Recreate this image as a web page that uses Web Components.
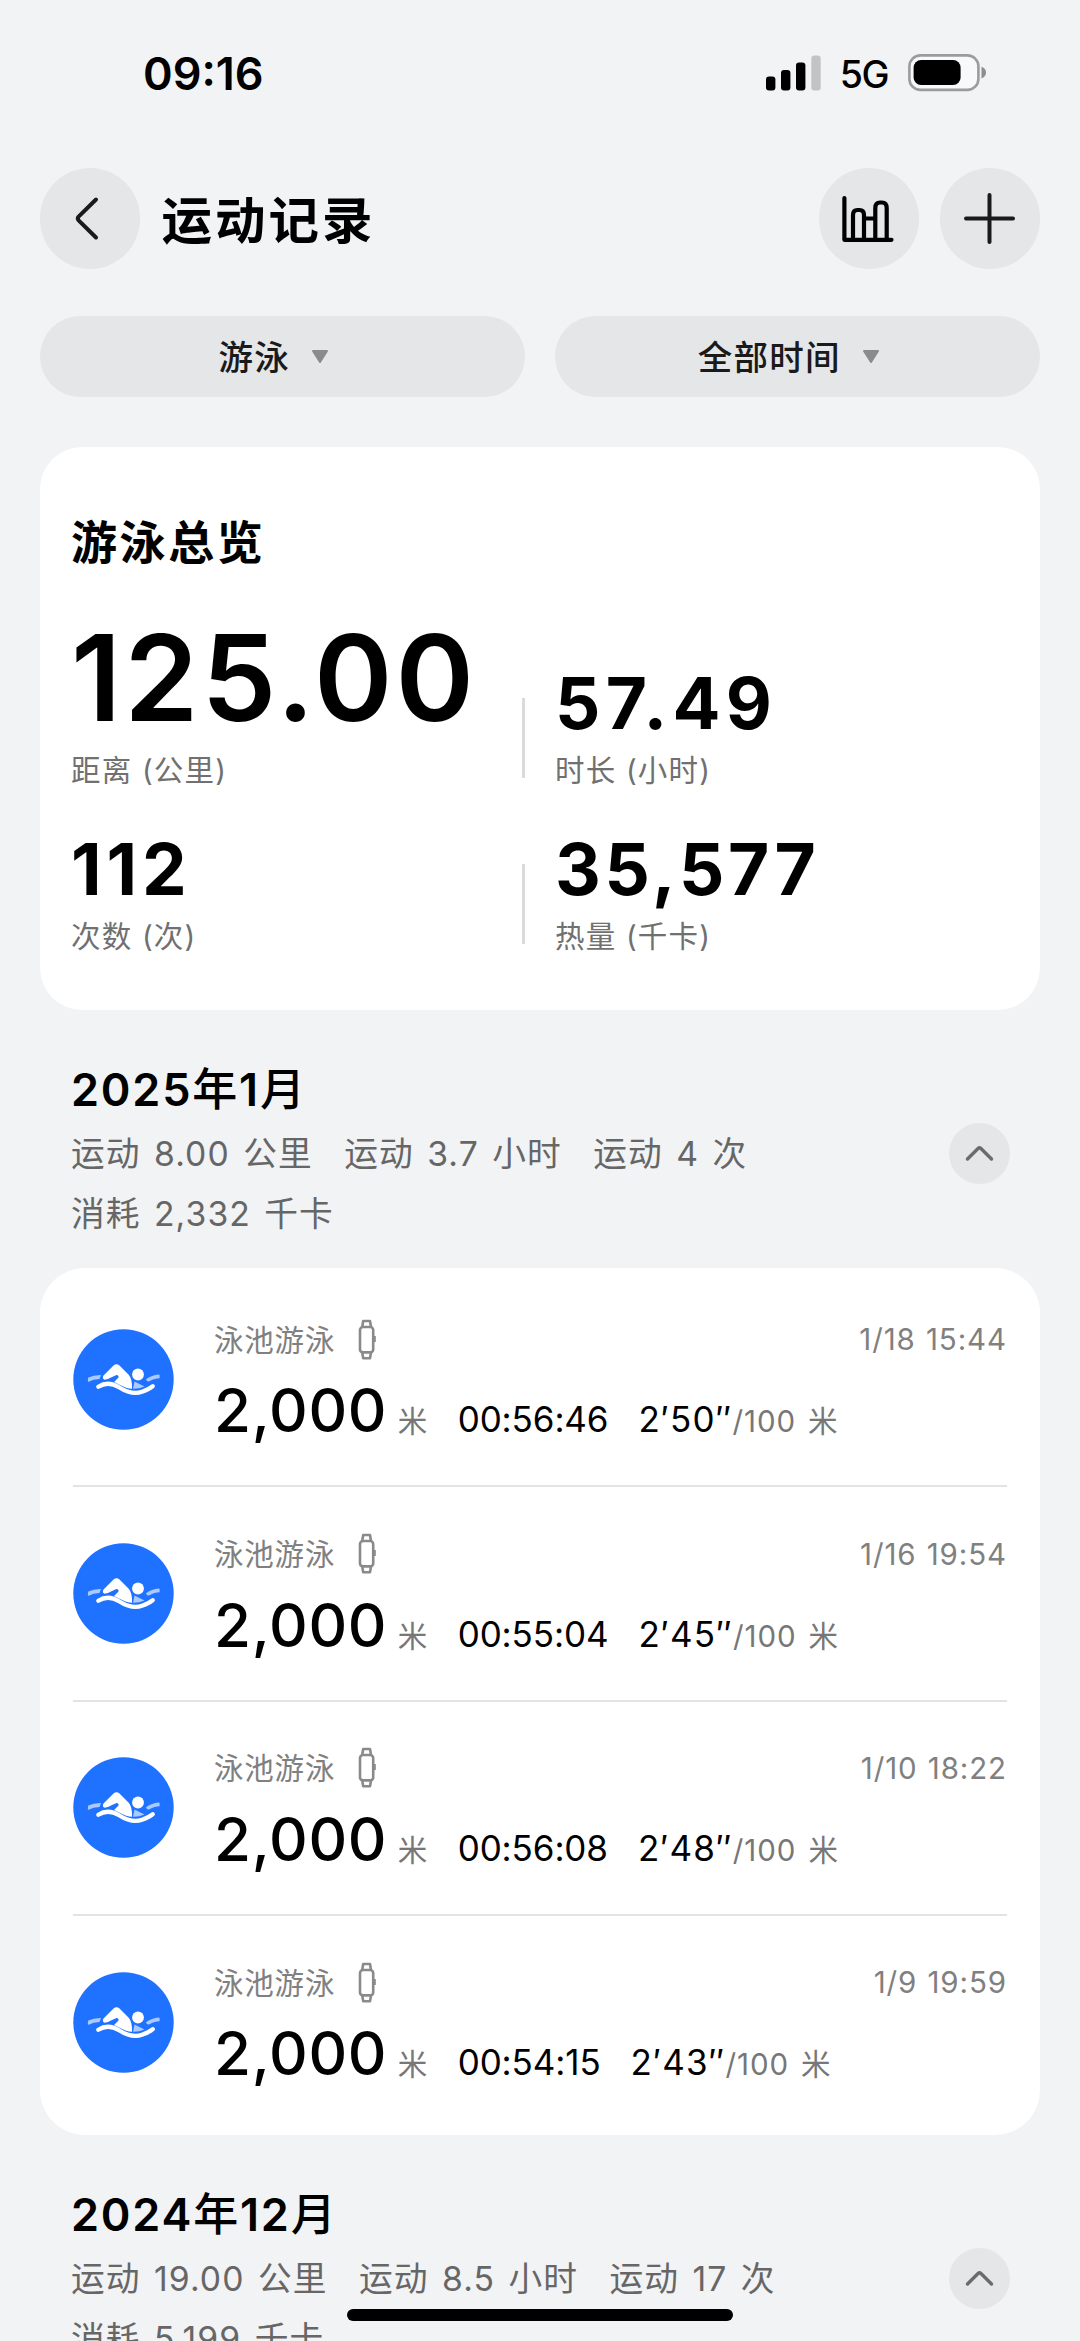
<!DOCTYPE html>
<html lang="zh-CN">
<head>
<meta charset="utf-8">
<title>运动记录</title>
<style>
  body {
    margin: 0;
    background: #f2f3f5;
    font-family: Inter, "Noto Sans CJK SC", sans-serif;
    color: #000;
  }
</style>
</head>
<body>
<sport-records></sport-records>

<script>
class StatusBar extends HTMLElement {
  connectedCallback() {
    this.attachShadow({ mode: "open" }).innerHTML = /*html*/ `
    <style>
      :host {
        display: flex;
        justify-content: space-between;
        align-items: center;
        height: 146px;
        padding: 0 94px 0 143px;
      }
      .time {
        font-size: 45px;
        font-weight: 600;
        letter-spacing: 0;
      }
      .right {
        display: flex;
        align-items: center;
      }
      .net {
        font-size: 37.5px;
        font-weight: 500;
        letter-spacing: -1.5px;
        margin: 3px 20px 0 19px;
      }
      svg { display: block; }
    </style>
    <span class="time">${this.getAttribute("time")}</span>
    <div class="right">
      <svg width="55" height="36" viewBox="0 0 55 36">
        <rect x="0" y="21.5" width="9.4" height="14" rx="3"/>
        <rect x="15" y="15" width="9.4" height="20.5" rx="3"/>
        <rect x="30" y="7.5" width="9.4" height="28" rx="3"/>
        <rect x="45.3" y="0.5" width="9.4" height="35" rx="3" fill="#c2c3c5"/>
      </svg>
      <span class="net">${this.getAttribute("network")}</span>
      <svg width="78" height="38" viewBox="0 0 78 38">
        <rect x="1.4" y="1.4" width="69" height="34.5" rx="11" fill="#f8f9fa" stroke="#9b9c9e" stroke-width="2.6"/>
        <rect x="5.6" y="6" width="47" height="25" rx="7.5"/>
        <path d="M73.5 12.8q4.5 1.5 4.5 5.8t-4.5 5.8z" fill="#8d8e90"/>
      </svg>
    </div>
    `;
  }
}
customElements.define("status-bar", StatusBar);

class IconButton extends HTMLElement {
  connectedCallback() {
    this.attachShadow({ mode: "open" }).innerHTML = /*html*/ `
    <style>
      :host {
        display: flex;
        align-items: center;
        justify-content: center;
        flex: none;
        width: var(--size, 100.5px);
        height: var(--size, 100.5px);
        border-radius: 50%;
        background: #e5e6e8;
      }
    </style>
    <slot></slot>
    `;
  }
}
customElements.define("icon-button", IconButton);

class PageHeader extends HTMLElement {
  connectedCallback() {
    this.attachShadow({ mode: "open" }).innerHTML = /*html*/ `
    <style>
      :host {
        display: flex;
        align-items: center;
        height: 101px;
        padding: 22px 40px 0 39.5px;
      }
      h1 {
        flex: 1;
        margin: 4px 0 0 21.5px;
        font-size: 50.5px;
        font-weight: 700;
        line-height: 70px;
        letter-spacing: 3px;
      }
      .add { margin-left: 20.5px; }
      svg {
        display: block;
        flex: none;
        fill: none;
        stroke: #1a1a1a;
        stroke-width: 4;
        stroke-linecap: round;
        stroke-linejoin: round;
      }
      .chart svg { stroke: #000; stroke-width: 4.2; }
    </style>
    <icon-button>
      <svg width="101" height="101" viewBox="0 0 101 101">
        <path d="M57 31.5L39.6 48.7Q38 50.5 39.6 52.3L57 69.5"/>
      </svg>
    </icon-button>
    <h1><slot></slot></h1>
    <icon-button class="chart">
      <svg width="101" height="101" viewBox="0 0 101 101">
        <path d="M26.4 30V71.8H73.5"/>
        <path d="M35 71V47Q35 42 39.5 42H41.5Q46 42 46 47V71"/>
        <path d="M57.3 71V40Q57.3 34.5 62 34.5H64Q68.7 34.5 68.7 40V71M46 50.5H57.3"/>
      </svg>
    </icon-button>
    <icon-button class="add">
      <svg width="101" height="101" viewBox="0 0 101 101">
        <path d="M50.5 27V74M27 50.5H74"/>
      </svg>
    </icon-button>
    `;
  }
}
customElements.define("page-header", PageHeader);

class FilterPill extends HTMLElement {
  connectedCallback() {
    this.attachShadow({ mode: "open" }).innerHTML = /*html*/ `
    <style>
      :host {
        display: flex;
        flex: 1;
        align-items: center;
        justify-content: center;
        gap: 21.5px;
        height: 81px;
        padding-right: 17px;
        box-sizing: border-box;
        border-radius: 41px;
        background: #e5e6e8;
        color: #1a1a1a;
        font-size: 34.5px;
        font-weight: 500;
        letter-spacing: 1.2px;
      }
      .text { margin-bottom: 3px; }
      svg { display: block; }
    </style>
    <span class="text"><slot></slot></span>
    <svg width="18" height="14" viewBox="0 0 18 14">
      <path d="M2 1H16L9 12z" fill="#8a8b8d" stroke="#8a8b8d" stroke-width="2" stroke-linejoin="round"/>
    </svg>
    `;
  }
}
customElements.define("filter-pill", FilterPill);

class StatItem extends HTMLElement {
  connectedCallback() {
    this.attachShadow({ mode: "open" }).innerHTML = /*html*/ `
    <style>
      :host {
        display: flex;
        flex-direction: column;
        justify-content: flex-end;
      }
      .value {
        font-size: 71px;
        font-weight: 700;
        line-height: 80px;
        letter-spacing: var(--tracking, 4.9px);
        margin-bottom: 7px;
      }
      :host([big]) .value {
        font-size: 119px;
        font-weight: 620;
        line-height: 120px;
        letter-spacing: 3px;
        margin-bottom: 12px;
      }
      .label {
        font-size: 29.5px;
        line-height: 40px;
        letter-spacing: 1.2px;
        color: #707070;
        font-weight: 370;
      }
    </style>
    <div class="value">${this.getAttribute("value")}</div>
    <div class="label"><slot></slot></div>
    `;
  }
}
customElements.define("stat-item", StatItem);

class OverviewCard extends HTMLElement {
  connectedCallback() {
    this.attachShadow({ mode: "open" }).innerHTML = /*html*/ `
    <style>
      :host {
        display: block;
        box-sizing: border-box;
        height: 563px;
        margin: 50px 40px 0;
        padding: 65px 31px 0;
        border-radius: 42px;
        background: #fff;
      }
      h2 {
        margin: 0 0 46px;
        font-size: 46px;
        font-weight: 700;
        line-height: 60px;
        letter-spacing: 2.6px;
      }
      .row {
        display: flex;
        align-items: flex-end;
      }
      .row + .row { margin-top: 39px; }
      .row > :first-child { width: 451px; }
      .line {
        width: 3px;
        height: 80px;
        margin: 0 30px 12px 0;
        background: #dadada;
      }
      .hours { --tracking: 5.3px; }
      .calories { --tracking: 3.7px; }
    </style>
    <h2>游泳总览</h2>
    <div class="row">
      <stat-item big value="125.00">距离 (公里)</stat-item>
      <div class="line"></div>
      <stat-item class="hours" value="57.49">时长 (小时)</stat-item>
    </div>
    <div class="row">
      <stat-item value="112">次数 (次)</stat-item>
      <div class="line"></div>
      <stat-item class="calories" value="35,577">热量 (千卡)</stat-item>
    </div>
    `;
  }
}
customElements.define("overview-card", OverviewCard);

class MonthHeader extends HTMLElement {
  connectedCallback() {
    const parts = this.getAttribute("summary").split("|");
    this.attachShadow({ mode: "open" }).innerHTML = /*html*/ `
    <style>
      :host {
        display: block;
        padding: 50px 70px 0 71px;
      }
      h3 {
        margin: 0 0 3px;
        font-size: 45px;
        font-weight: 560;
        line-height: 60px;
        letter-spacing: 1.8px;
      }
      .row {
        display: flex;
        align-items: flex-start;
        justify-content: space-between;
      }
      .summary {
        display: flex;
        flex-wrap: wrap;
        width: 860px;
        padding-top: 1px;
        column-gap: 31.5px;
        font-size: 33.7px;
        line-height: 60px;
        letter-spacing: 1.1px;
        word-spacing: 2.8px;
        color: #666;
      }
      icon-button { --size: 61px; }
      svg { display: block; }
    </style>
    <h3><slot></slot></h3>
    <div class="row">
      <div class="summary">${parts.map((p) => `<span>${p}</span>`).join("")}</div>
      <icon-button>
        <svg width="61" height="61" viewBox="0 0 61 61" fill="none" stroke="#6a6b6d" stroke-width="3.4" stroke-linecap="round" stroke-linejoin="round">
          <path d="M18.5 36L29.3 25.2Q30.5 24 31.7 25.2L42.5 36"/>
        </svg>
      </icon-button>
    </div>
    `;
  }
}
customElements.define("month-header", MonthHeader);

class SwimIcon extends HTMLElement {
  connectedCallback() {
    this.attachShadow({ mode: "open" }).innerHTML = /*html*/ `
    <style>
      :host { display: block; flex: none; }
      svg { display: block; }
    </style>
    <svg width="101" height="101" viewBox="0 0 101 101" fill="none" stroke-linecap="round">
      <circle cx="50.5" cy="50.5" r="50.2" fill="#1f71ff"/>
      <path d="M61.5 52.5L71.5 57.5Q66 60 60 59.8z" fill="#a9c9ff"/>
      <path d="M14.8 51.5L15.2 48.5Q21 45.8 28 46L26.5 50Q20 50.3 15.8 52.8Q14.8 52.8 14.8 51.5z" fill="#a9c9ff"/>
      <path d="M86.6 46.3V49.3Q82 49.3 76 52.6Q73.5 52.8 73 50.2Q79 45.8 85.5 45.4Q86.6 45.4 86.6 46.3z" fill="#a9c9ff"/>
      <path d="M31.5 50.8Q28.8 49.5 30.5 46.5L40.5 36.5Q43.5 34 46.5 36.5L55.5 45.5Q59.5 50 59 59.7Q54 59.8 46 55.5L41 53L45.5 48.5Q46 46.2 43.5 46L38.5 48.3Q35 50.7 31.5 50.8z" fill="#fff"/>
      <circle cx="65" cy="45.5" r="5.9" fill="#fff"/>
      <path d="M25.3 57.8Q35 51.5 46 58.2Q59 66.5 69 62.8Q76 60.5 79.8 57.2" stroke="#fff" stroke-width="4.2"/>
    </svg>
    `;
  }
}
customElements.define("swim-icon", SwimIcon);

class RecordRow extends HTMLElement {
  connectedCallback() {
    this.attachShadow({ mode: "open" }).innerHTML = /*html*/ `
    <style>
      :host {
        display: flex;
        align-items: center;
        gap: 40px;
        height: 214.4px;
        box-sizing: border-box;
        border-bottom: 2px solid #e3e3e4;
      }
      :host(:last-child) { border-color: transparent; }
      .body { flex: 1; padding-top: 18px; }
      .top {
        display: flex;
        align-items: center;
        height: 40px;
        margin-bottom: 15px;
        font-size: 29.5px;
        letter-spacing: 0.8px;
        font-weight: 370;
        color: #808080;
      }
      .top span { margin-top: -3px; }
      .top svg { display: block; margin-left: 22.5px; }
      .top .date {
        margin: 0 0 0 auto;
        font-weight: 380;
        letter-spacing: 0.9px;
        word-spacing: 1px;
      }
      .data {
        display: flex;
        align-items: baseline;
        line-height: 72px;
        font-size: 35px;
        white-space: pre;
      }
      .distance { font-size: 60px; font-weight: 540; letter-spacing: 0.7px; }
      .unit {
        font-size: 29.5px;
        font-weight: 380;
        letter-spacing: 0.9px;
        word-spacing: 3px;
        color: #777;
      }
      .distance + .unit { margin: 0 29.5px 0 10.5px; }
      .time { margin-right: 30px; letter-spacing: -0.1px; }
      .pace { letter-spacing: 1.2px; }
    </style>
    <swim-icon></swim-icon>
    <div class="body">
      <div class="top">
        <span>泳池游泳</span>
        <svg width="19" height="41" viewBox="0 0 19 41" fill="none" stroke="#8a8a8a" stroke-width="2.6" stroke-linejoin="round">
          <rect x="2" y="8" width="13.2" height="25.4" rx="3"/>
          <path d="M4.2 8L5.2 2H12L13 8M4.2 33.4L5.2 39.2H12L13 33.4"/>
          <path d="M16.8 17V23" stroke-width="2"/>
        </svg>
        <span class="date">${this.getAttribute("date")}</span>
      </div>
      <div class="data"><span class="distance">${this.getAttribute("distance")}</span><span class="unit">米</span><span class="time">${this.getAttribute("time")}</span><span class="pace">${this.getAttribute("pace")}</span><span class="unit">/100 米</span></div>
    </div>
    `;
  }
}
customElements.define("record-row", RecordRow);

class RecordList extends HTMLElement {
  connectedCallback() {
    this.attachShadow({ mode: "open" }).innerHTML = /*html*/ `
    <style>
      :host {
        display: block;
        box-sizing: border-box;
        height: 866.5px;
        margin: 24px 40px 0;
        padding: 5px 33px 0;
        border-radius: 45px;
        background: #fff;
      }
    </style>
    <slot></slot>
    `;
  }
}
customElements.define("record-list", RecordList);

class SportRecords extends HTMLElement {
  connectedCallback() {
    this.attachShadow({ mode: "open" }).innerHTML = /*html*/ `
    <style>
      :host {
        display: block;
        position: relative;
        width: 1080px;
        height: 2341px;
        overflow: hidden;
      }
      .filters {
        display: flex;
        gap: 30px;
        padding: 47px 40px 0;
      }
      /* system home bar, floats over the list */
      .home {
        position: absolute;
        left: 347px;
        bottom: 20px;
        width: 386px;
        height: 12.5px;
        border-radius: 7px;
        background: #000;
      }
    </style>
    <status-bar time="09:16" network="5G"></status-bar>
    <page-header>运动记录</page-header>
    <div class="filters">
      <filter-pill>游泳</filter-pill>
      <filter-pill>全部时间</filter-pill>
    </div>
    <overview-card></overview-card>
    <month-header summary="运动 8.00 公里|运动 3.7 小时|运动 4 次|消耗 2,332 千卡">2025年1月</month-header>
    <record-list>
      <record-row date="1/18 15:44" distance="2,000" time="00:56:46" pace="2′50″"></record-row>
      <record-row date="1/16 19:54" distance="2,000" time="00:55:04" pace="2′45″"></record-row>
      <record-row date="1/10 18:22" distance="2,000" time="00:56:08" pace="2′48″"></record-row>
      <record-row date="1/9 19:59" distance="2,000" time="00:54:15" pace="2′43″"></record-row>
    </record-list>
    <month-header summary="运动 19.00 公里|运动 8.5 小时|运动 17 次|消耗 5,199 千卡">2024年12月</month-header>
    <div class="home"></div>
    `;
  }
}
customElements.define("sport-records", SportRecords);
</script>
</body>
</html>
